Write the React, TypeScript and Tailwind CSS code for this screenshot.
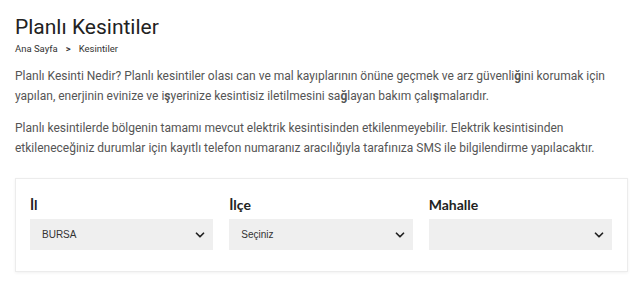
import { ChevronDown } from 'lucide-react'

const selects = [
  { label: 'İl', value: 'BURSA' },
  { label: 'İlçe', value: 'Seçiniz' },
  { label: 'Mahalle', value: '' },
]

function Select({ label, value }: { label: string; value: string }) {
  return (
    <div>
      <div className="mb-[4px] text-[14px] leading-[20px] font-bold text-[#222] font-['Lato',sans-serif]">
        {label}
      </div>
      <div className="flex h-[31px] items-center justify-between bg-[#efefef] pl-[12px] pr-[6px]">
        <span className="text-[10px] text-[#333] font-['Liberation_Sans',Arial,sans-serif]">{value}</span>
        <ChevronDown size={14} strokeWidth={3} className="text-[#222]" />
      </div>
    </div>
  )
}

export default function App() {
  return (
    <div className="min-h-screen bg-white px-[15px] pt-[13px] font-['Roboto',sans-serif]">
      <h1 className="text-[21px] leading-[28px] text-[#222]">Planlı Kesintiler</h1>
      <div className="mt-[1px] flex items-center gap-[8px] text-[9.5px] leading-[14px] text-[#333]">
        <span>Ana Sayfa</span>
        <span className="font-bold">&gt;</span>
        <span>Kesintiler</span>
      </div>

      <div className="mt-[10px] w-[610px] text-[12px] leading-[20px] text-[#555]">
        <p>
          Planlı Kesinti Nedir? Planlı kesintiler olası can ve mal kayıplarının önüne geçmek ve arz güvenli
          <b>ğ</b>ini korumak için yapılan, enerjinin evinize ve i<b>ş</b>yerinize kesintisiz iletilmesini sa
          <b>ğ</b>layan bakım çalı<b>ş</b>malarıdır.
        </p>
        <p className="mt-[12px]">
          Planlı kesintilerde bölgenin tamamı mevcut elektrik kesintisinden etkilenmeyebilir. Elektrik kesintisinden
          etkileneceğiniz durumlar için kayıtlı telefon numaranız aracılığıyla tarafınıza SMS ile bilgilendirme
          yapılacaktır.
        </p>
      </div>

      <div className="mt-[20px] w-[613px] border border-[#ececec] bg-white pl-[14px] pr-[15px] pt-[16px] pb-[21px] shadow-[0_1px_3px_rgba(0,0,0,0.06)]">
        <div className="grid grid-cols-3 gap-[16px]">
          {selects.map((s) => (
            <Select key={s.label} label={s.label} value={s.value} />
          ))}
        </div>
      </div>
    </div>
  )
}
